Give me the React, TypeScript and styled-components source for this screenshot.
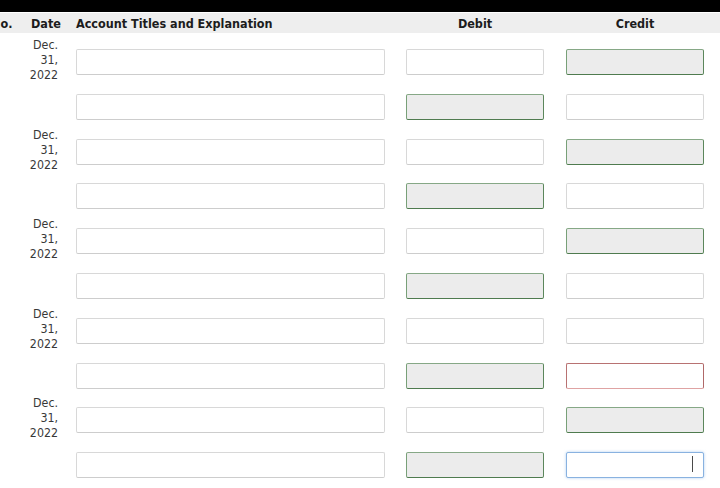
import React from 'react';
import styled, {createGlobalStyle, css} from 'styled-components';

type Tone = 'plain' | 'ok' | 'bad' | 'focus';

type Line = {
    date?: boolean;
    debit: Tone;
    credit: Tone;
}

const lines: Line[] = [
    {date: true, debit: 'plain', credit: 'ok'},
    {debit: 'ok', credit: 'plain'},
    {date: true, debit: 'plain', credit: 'ok'},
    {debit: 'ok', credit: 'plain'},
    {date: true, debit: 'plain', credit: 'ok'},
    {debit: 'ok', credit: 'plain'},
    {date: true, debit: 'plain', credit: 'plain'},
    {debit: 'ok', credit: 'bad'},
    {date: true, debit: 'plain', credit: 'ok'},
    {debit: 'ok', credit: 'focus'},
];

const GlobalStyle = createGlobalStyle`
    html, body {
        margin: 0;
        padding: 0;
        background: #fff;
        overflow: hidden;
    }
    body {
        font-family: "DejaVu Sans Condensed", "DejaVu Sans", "Liberation Sans", sans-serif;
        font-stretch: condensed;
        color: #222;
    }
`;

const TopBar = styled.div`
    height: 12px;
    background: #000;
    border-bottom: 1px solid #fff;
`;

const Sheet = styled.div`
    margin-left: -12px;
    width: 744px;
`;

const columns = css`
    display: grid;
    grid-template-columns: 34px 48px 325px 160px 160px;
`;

const HeaderRow = styled.div`
    ${columns};
    height: 20px;
    align-items: center;
    background: #eeeeee;
    font-size: 12.5px;
    font-weight: bold;
    color: #1c1c1c;
`;

const HeadCell = styled.div<{$align?: 'left' | 'center'; $pad?: number}>`
    text-align: ${({$align}) => $align || 'center'};
    padding-left: ${({$pad}) => $pad || 0}px;
    white-space: nowrap;
`;

const EntryRow = styled.div`
    ${columns};
    height: 44.8px;
    align-items: start;
`;

const DateCell = styled.div`
    padding: 5px 12px 0 0;
    text-align: right;
    font-size: 12.3px;
    line-height: 15px;
    color: #383838;
`;

const InputCell = styled.div<{$center?: boolean}>`
    display: flex;
    justify-content: ${({$center}) => ($center ? 'center' : 'flex-start')};
    padding-left: ${({$center}) => ($center ? 0 : 6)}px;
    padding-top: 16px;
`;

const toneStyles = {
    plain: css`
        background: #fff;
        border-color: #d8d8d8 #d8d8d8 #cdcdcd #d8d8d8;
    `,
    ok: css`
        background: #ececec;
        border-color: #86a886 #5c875c #4f7b4f #78a078;
    `,
    bad: css`
        background: #fff;
        border-color: #b87272 #b06868 #dfa3a3 #b87272;
    `,
    focus: css`
        background: #fff;
        border-color: #89b2e0;
        box-shadow: 0 0 3px rgba(110, 165, 230, 0.55);
    `,
};

const Field = styled.input<{$tone: Tone; $wide?: boolean}>`
    box-sizing: border-box;
    width: ${({$wide}) => ($wide ? 309 : 138)}px;
    height: 26px;
    margin: 0;
    padding: 0 6px;
    border: 1px solid;
    border-radius: 2px;
    outline: none;
    font: inherit;
    font-size: 12px;
    text-align: right;
    ${({$tone}) => toneStyles[$tone]};
`;

const FieldWrap = styled.div`
    position: relative;
`;

const Caret = styled.span`
    position: absolute;
    right: 11px;
    top: 4px;
    width: 1px;
    height: 16px;
    background: #4a4a4a;
`;

const Amount = ({tone}: {tone: Tone}) => (
    <InputCell $center>
        <FieldWrap>
            <Field
                $tone={tone}
                readOnly
            />
            {tone === 'focus' && <Caret/>}
        </FieldWrap>
    </InputCell>
);

const App = () => (
    <>
        <GlobalStyle/>
        <TopBar/>
        <Sheet>
            <HeaderRow>
                <HeadCell
                    $align='left'
                    $pad={3}
                >
                    {'No.'}
                </HeadCell>
                <HeadCell>{'Date'}</HeadCell>
                <HeadCell
                    $align='left'
                    $pad={6}
                >
                    {'Account Titles and Explanation'}
                </HeadCell>
                <HeadCell>{'Debit'}</HeadCell>
                <HeadCell>{'Credit'}</HeadCell>
            </HeaderRow>
            {lines.map((line, i) => (
                <EntryRow key={`line-${i}`}>
                    <div/>
                    <DateCell>{line.date ? 'Dec. 31, 2022' : ''}</DateCell>
                    <InputCell>
                        <Field
                            $tone='plain'
                            $wide
                            readOnly
                        />
                    </InputCell>
                    <Amount tone={line.debit}/>
                    <Amount tone={line.credit}/>
                </EntryRow>
            ))}
        </Sheet>
    </>
);

export default App;
